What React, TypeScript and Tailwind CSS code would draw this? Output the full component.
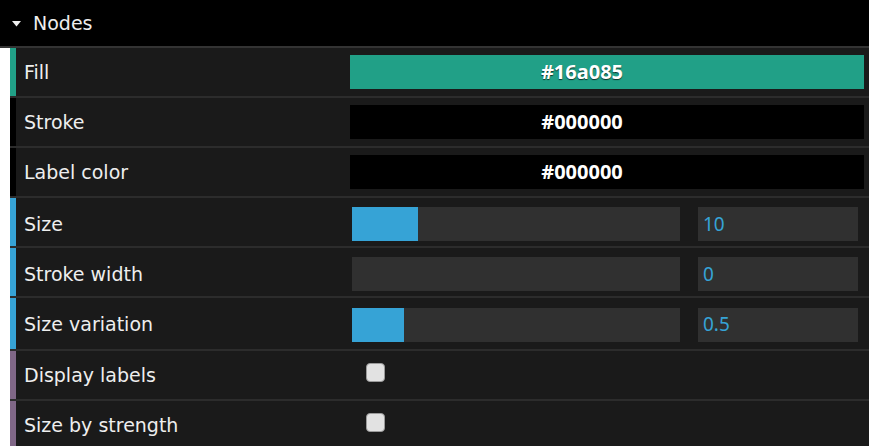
import React from "react";

type Row =
  | { kind: "color"; label: string; value: string; accent: string }
  | { kind: "number"; label: string; value: string; pct: number; tall?: boolean }
  | { kind: "bool"; label: string };

const rows: Row[] = [
  { kind: "color", label: "Fill", value: "#16a085", accent: "#21a087" },
  { kind: "color", label: "Stroke", value: "#000000", accent: "#000000" },
  { kind: "color", label: "Label color", value: "#000000", accent: "#000000" },
  { kind: "number", label: "Size", value: "10", pct: 20 },
  { kind: "number", label: "Stroke width", value: "0", pct: 0 },
  { kind: "number", label: "Size variation", value: "0.5", pct: 16, tall: true },
  { kind: "bool", label: "Display labels" },
  { kind: "bool", label: "Size by strength" },
];

const labelFont = { fontFamily: '"DejaVu Sans", "Noto Sans", sans-serif' };
const valueFont = { fontFamily: '"Noto Sans", "DejaVu Sans", sans-serif' };

function Control({ row }: { row: Row }) {
  if (row.kind === "color") {
    return (
      <div
        className="w-[514px] h-[34px] flex items-center justify-center pr-[50px] text-[20px] font-bold text-white [text-shadow:0_1px_1px_rgba(0,0,0,0.7)]"
        style={{ ...valueFont, backgroundColor: row.accent }}
      >
        {row.value}
      </div>
    );
  }
  if (row.kind === "number") {
    return (
      <div className="flex items-center pl-[2px]">
        <div className="w-[328px] h-[34px] bg-[#303030]">
          <div className="h-full bg-[#36a3d6]" style={{ width: `${row.pct}%` }} />
        </div>
        <div
          className="ml-[18px] w-[160px] h-[34px] bg-[#303030] flex items-center pl-[5px] text-[19px] text-[#36a3d6]"
          style={valueFont}
        >
          {row.value}
        </div>
      </div>
    );
  }
  return (
    <div className="pl-[16px] mb-[6px] flex items-center">
      <div className="w-[19px] h-[19px] rounded-[4px] bg-[#e2e2e2] border border-[#9a9a9a]" />
    </div>
  );
}

export default function App() {
  return (
    <div className="w-[869px] h-[446px] bg-white overflow-hidden" style={labelFont}>
      <div className="h-[48px] bg-black border-b-2 border-[#333333] flex items-center pl-[12px] text-[19px] text-[#eeeeee]">
        <svg width="9" height="6" viewBox="0 0 9 6" className="mr-[12px] mt-[1px]">
          <path d="M0 0 L9 0 L4.5 5.5 Z" fill="#eeeeee" />
        </svg>
        <span>Nodes</span>
      </div>
      {rows.map((row) => {
        const accent =
          row.kind === "color" ? row.accent : row.kind === "number" ? "#36a3d6" : "#806787";
        const inner =
          row.kind === "number"
            ? row.tall
              ? "h-[51px] pt-[2px]"
              : "h-[48px] pt-[4px]"
            : "h-[48px]";
        return (
          <div key={row.label} className="ml-[10px] border-b-2 border-[#2c2c2c] bg-[#1a1a1a]">
            <div
              className={`${inner} border-l-[6px] flex items-center`}
              style={{ borderLeftColor: accent }}
            >
              <div className="w-[334px] pl-[8px] text-[19px] text-[#eeeeee] shrink-0">
                {row.label}
              </div>
              <Control row={row} />
            </div>
          </div>
        );
      })}
    </div>
  );
}
